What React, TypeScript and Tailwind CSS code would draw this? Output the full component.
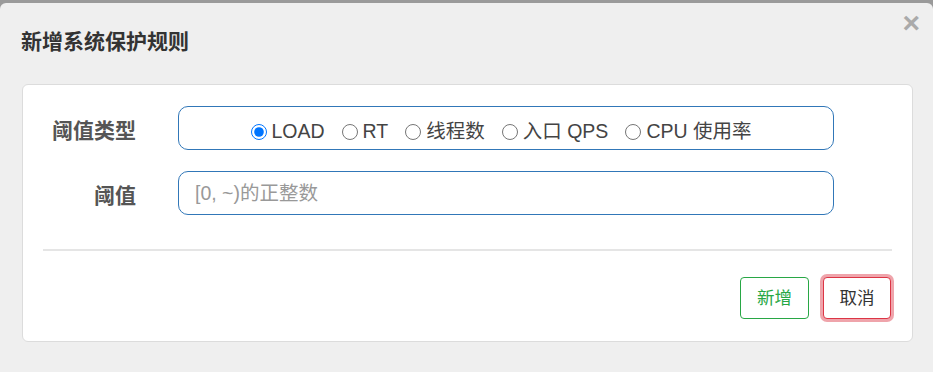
import { useState } from 'react';

const types = ['LOAD', 'RT', '线程数', '入口 QPS', 'CPU 使用率'];

export default function App() {
  const [grade, setGrade] = useState('LOAD');

  return (
    <div
      className="h-[372px] w-[933px] bg-[#9a9a9a] pt-[3px]"
      style={{ fontFamily: '"Liberation Sans", "Noto Sans CJK SC", sans-serif' }}
    >
      <div className="relative h-[369px] rounded-t-[6px] bg-[#efefef]">
        <h4 className="absolute left-[21px] top-[25px] text-[21px] font-bold leading-[28px] text-[#333]">
          新增系统保护规则
        </h4>
        <button className="absolute right-[13px] top-[5px] text-[30px] font-bold leading-[30px] text-[#aaa]">
          ×
        </button>

        <div className="absolute left-[22px] top-[81px] h-[258px] w-[891px] rounded-[6px] border border-[#dcdcdc] bg-white">
          <div className="flex flex-col gap-[21px] pt-[21px]">
            <div className="flex items-center">
              <label className="w-[113px] pt-[6px] text-right text-[21px] font-bold text-[#555]">阈值类型</label>
              <div className="ml-[42px] flex h-[44px] w-[656px] items-center justify-center gap-[17px] rounded-[10px] border border-[#3177b8] pr-[10px] pt-[7px]">
                {types.map((t) => (
                  <label key={t} className="flex items-center gap-[5px] text-[19.5px] text-[#444]">
                    <input
                      type="radio"
                      name="grade"
                      checked={grade === t}
                      onChange={() => setGrade(t)}
                      className="m-0 h-[16px] w-[16px] accent-[#0075ff]"
                    />
                    {t}
                  </label>
                ))}
              </div>
            </div>
            <div className="flex items-center">
              <label className="w-[113px] pt-[6px] text-right text-[21px] font-bold text-[#555]">阈值</label>
              <input
                type="text"
                placeholder="[0, ~)的正整数"
                className="ml-[42px] h-[44px] w-[656px] rounded-[10px] border border-[#3177b8] px-[16px] text-[19.5px] text-[#444] outline-none placeholder:text-[#999]"
              />
            </div>
          </div>

          <div className="mx-[20px] mt-[34px] h-[2px] bg-[#e5e5e5]" />

          <div className="mt-[26px] flex justify-end gap-[14px] pr-[21px]">
            <button className="h-[42px] w-[69px] rounded-[4px] border border-[#28a745] bg-white text-[17.5px] text-[#28a745]">
              新增
            </button>
            <button className="h-[42px] w-[68px] rounded-[4px] border border-[#dc3545] bg-white text-[17.5px] text-[#333] shadow-[0_0_0_3px_rgba(220,53,69,0.45)]">
              取消
            </button>
          </div>
        </div>
      </div>
    </div>
  );
}
